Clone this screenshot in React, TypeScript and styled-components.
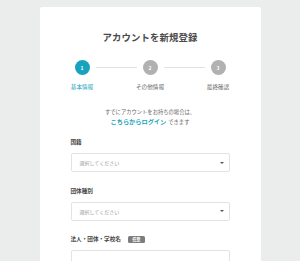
import React from 'react';
import styled, { createGlobalStyle } from 'styled-components';

const GlobalStyle = createGlobalStyle`
  html, body {
    margin: 0;
    padding: 0;
    background: #ebecec;
  }
  body {
    font-family: 'Noto Sans CJK JP', 'Noto Sans', sans-serif;
    color: #444;
  }
`;

const Page = styled.div`
  padding-top: 7px;
  height: 254px;
  overflow: hidden;
`;

const Card = styled.div`
  width: 221px;
  margin: 0 auto;
  background: #fff;
  border-radius: 2px;
  padding: 25px 0 40px;
  box-sizing: border-box;
  min-height: 260px;
`;

const Title = styled.h1`
  margin: 0;
  font-size: 9.4px;
  line-height: 10px;
  font-weight: 700;
  text-align: center;
  color: #4a4a4a;
  letter-spacing: 0.1px;
`;

const Stepper = styled.div`
  margin-top: 18px;
  display: flex;
  flex-direction: column;
  align-items: center;
`;

const CircleRow = styled.div`
  display: flex;
  align-items: center;
`;

const Circle = styled.div<{ $active?: boolean }>`
  width: 15px;
  height: 15px;
  border-radius: 50%;
  background: ${p => (p.$active ? '#17a3bd' : '#b1b1b1')};
  color: #fff;
  font-size: 5px;
  font-weight: 700;
  display: flex;
  align-items: center;
  justify-content: center;
`;

const Connector = styled.div`
  width: 41px;
  height: 1px;
  margin: 0 6px;
  background: #e2e2e2;
`;

const LabelRow = styled.div`
  margin-top: 8px;
  display: grid;
  grid-template-columns: repeat(3, 68px);
`;

const StepLabel = styled.div<{ $active?: boolean }>`
  text-align: center;
  font-size: 5.6px;
  line-height: 8px;
  color: ${p => (p.$active ? '#17a3bd' : '#666')};
`;

const Notice = styled.p`
  margin: 16px 0 0;
  text-align: center;
  font-size: 5.3px;
  line-height: 10px;
  color: #666;
`;

const LoginLink = styled.a`
  color: #17a3bd;
  font-weight: 700;
  font-size: 6.2px;
  text-decoration: none;
  margin-right: 2px;
`;

const Form = styled.div`
  padding: 0 31px;
  margin-top: 11px;
`;

const Field = styled.div`
  margin-bottom: 14.5px;
`;

const FieldLabel = styled.div`
  display: flex;
  align-items: center;
  gap: 7px;
  font-size: 5.6px;
  line-height: 8px;
  font-weight: 700;
  color: #444;
  margin-bottom: 7px;
`;

const Badge = styled.span`
  display: inline-flex;
  align-items: center;
  justify-content: center;
  width: 17px;
  height: 7px;
  border-radius: 1.5px;
  background: #7d7d7d;
  color: #fff;
  font-size: 4.2px;
  font-weight: 700;
`;

const SelectBox = styled.div`
  height: 19px;
  border: 1px solid #e3e3e3;
  border-radius: 2px;
  box-sizing: border-box;
  display: flex;
  align-items: center;
  justify-content: space-between;
  padding: 0 5px 0 8px;
`;

const Placeholder = styled.span`
  font-size: 5px;
  color: #9a9a9a;
`;

const Caret = styled.span`
  width: 0;
  height: 0;
  border-left: 2.2px solid transparent;
  border-right: 2.2px solid transparent;
  border-top: 2.5px solid #555;
`;

const TextInput = styled.div`
  height: 22px;
  border: 1px solid #e3e3e3;
  border-radius: 2px;
  box-sizing: border-box;
`;

const steps = ['基本情報', 'その他情報', '最終確認'];

const Select: React.FC = () => (
  <SelectBox>
    <Placeholder>選択してください</Placeholder>
    <Caret />
  </SelectBox>
);

const App: React.FC = () => {
  return (
    <Page>
      <GlobalStyle />
      <Card>
        <Title>アカウントを新規登録</Title>
        <Stepper>
          <CircleRow>
            {steps.map((_, i) => (
              <React.Fragment key={i}>
                {i > 0 && <Connector />}
                <Circle $active={i === 0}>{i + 1}</Circle>
              </React.Fragment>
            ))}
          </CircleRow>
          <LabelRow>
            {steps.map((s, i) => (
              <StepLabel key={s} $active={i === 0}>
                {s}
              </StepLabel>
            ))}
          </LabelRow>
        </Stepper>
        <Notice>
          すでにアカウントをお持ちの場合は、
          <br />
          <LoginLink href="#">こちらからログイン</LoginLink>できます
        </Notice>
        <Form>
          <Field>
            <FieldLabel>国籍</FieldLabel>
            <Select />
          </Field>
          <Field>
            <FieldLabel>団体種別</FieldLabel>
            <Select />
          </Field>
          <Field>
            <FieldLabel>
              法人・団体・学校名
              <Badge>任意</Badge>
            </FieldLabel>
            <TextInput />
          </Field>
        </Form>
      </Card>
    </Page>
  );
};

export default App;
